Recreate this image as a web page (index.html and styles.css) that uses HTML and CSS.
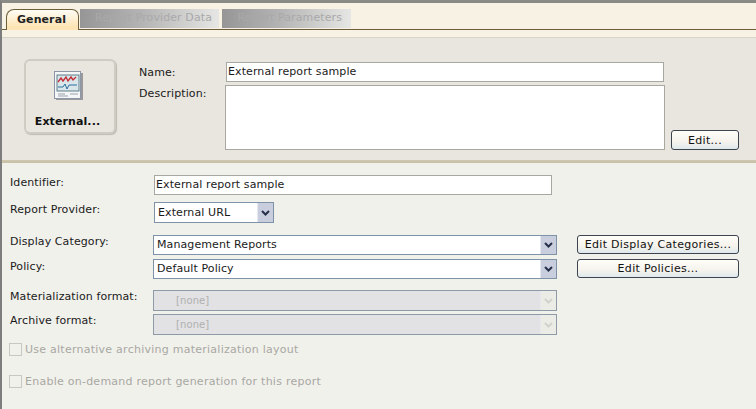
FILE: index.html
```html
<!DOCTYPE html>
<html lang="en">
<head>
<meta charset="utf-8">
<title>Report</title>
<link rel="stylesheet" href="styles.css">
</head>
<body>
<div class="frame">
  <div class="tabs">
    <div class="tab active">General</div>
    <div class="tab off off-a">Report Provider Data</div>
    <div class="tab off off-b">Report Parameters</div>
  </div>
  <div class="band"></div>
  <section class="upper">
    <div class="tile">
      <svg class="tile-icon" width="30" height="30" viewBox="0 0 30 30">
        <rect x="1.5" y="1.5" width="26" height="27" fill="#f4f6f8" stroke="#8c96a8"/>
        <rect x="28" y="3" width="2" height="27" fill="#9a9a9a"/>
        <rect x="3" y="29" width="27" height="1" fill="#9a9a9a"/>
        <rect x="4" y="5" width="22" height="16" fill="#d9e6ea" stroke="#5f7f8a" stroke-width="1"/>
        <path d="M5 12l3-4 2 3 3-4 2 4 3-4 2 3 3-3" fill="none" stroke="#c4303a" stroke-width="1.4"/>
        <path d="M5 17h5l2-3 2 5 2-4h8" fill="none" stroke="#2f6f9f" stroke-width="1"/>
        <path d="M5 24h7M5 26h10M17 24h8" stroke="#9aa3ad" stroke-width="1"/>
      </svg>
      <div class="tile-label">External...</div>
    </div>
    <div class="labels-top">
      <div class="lbl-name">Name:</div>
      <div class="lbl-desc">Description:</div>
    </div>
    <div class="fields-top">
      <div class="box box-name">External report sample</div>
      <div class="box box-desc"></div>
    </div>
    <button class="btn btn-edit" type="button">Edit...</button>
  </section>
  <div class="divider"></div>
  <section class="lower">
    <div class="row row-id">
      <div class="lbl">Identifier:</div>
      <div class="box box-id">External report sample</div>
    </div>
    <div class="row row-prov">
      <div class="lbl">Report Provider:</div>
      <div class="sel sel-prov"><span class="sel-text">External URL</span><span class="arrow"><svg width="9" height="6" viewBox="0 0 9 6"><path d="M1 1l3.5 3.5L8 1" fill="none" stroke="#26304a" stroke-width="2"/></svg></span></div>
    </div>
    <div class="row row-cat">
      <div class="lbl">Display Category:</div>
      <div class="sel sel-wide"><span class="sel-text">Management Reports</span><span class="arrow"><svg width="9" height="6" viewBox="0 0 9 6"><path d="M1 1l3.5 3.5L8 1" fill="none" stroke="#26304a" stroke-width="2"/></svg></span></div>
      <button class="btn btn-side" type="button">Edit Display Categories...</button>
    </div>
    <div class="row row-pol">
      <div class="lbl">Policy:</div>
      <div class="sel sel-wide"><span class="sel-text">Default Policy</span><span class="arrow"><svg width="9" height="6" viewBox="0 0 9 6"><path d="M1 1l3.5 3.5L8 1" fill="none" stroke="#26304a" stroke-width="2"/></svg></span></div>
      <button class="btn btn-side" type="button">Edit Policies...</button>
    </div>
    <div class="row row-mat">
      <div class="lbl">Materialization format:</div>
      <div class="sel sel-wide sel-off"><span class="sel-text">[none]</span><span class="arrow"><svg width="9" height="6" viewBox="0 0 9 6"><path d="M1 1l3.5 3.5L8 1" fill="none" stroke="#d2d2cc" stroke-width="2"/></svg></span></div>
    </div>
    <div class="row row-arc">
      <div class="lbl">Archive format:</div>
      <div class="sel sel-wide sel-off"><span class="sel-text">[none]</span><span class="arrow"><svg width="9" height="6" viewBox="0 0 9 6"><path d="M1 1l3.5 3.5L8 1" fill="none" stroke="#d2d2cc" stroke-width="2"/></svg></span></div>
    </div>
    <div class="check check-a"><span class="cb"></span><span>Use alternative archiving materialization layout</span></div>
    <div class="check check-b"><span class="cb"></span><span>Enable on-demand report generation for this report</span></div>
  </section>
</div>
</body>
</html>
```

FILE: styles.css
```css
html, body { margin: 0; padding: 0; }
body {
  width: 756px; height: 409px; overflow: hidden;
  font: 11px "DejaVu Sans", Verdana, sans-serif; color: #1a1a1a;
  letter-spacing: 0.1px;
}
.frame {
  width: 754px; height: 406px; overflow: hidden;
  border-left: 2px solid #7d7d7d; border-top: 3px solid #8a8a86;
  background: #f1f1ec;
}
.tabs {
  height: 26px; display: flex; align-items: flex-end; padding-left: 4px;
  background: #f8f2e4; border-bottom: 1px solid #6e5f3a;
}
.tab { box-sizing: border-box; white-space: nowrap; }
.active {
  width: 73px; height: 21px; margin-bottom: -1px; text-align: center;
  padding: 3px 2px 0 0; font-weight: bold; color: #222;
  background: linear-gradient(#fffdf6, #fde4b4 85%);
  border: 1px solid #6e5f3a; border-bottom: 0; border-radius: 8px 7px 0 0;
}
.off {
  height: 19px; margin-bottom: 1px; padding-top: 2px; color: #a9a9a9;
  text-align: right; padding-right: 7px; overflow: hidden;
  background: linear-gradient(90deg, #969696, #b4b4b4 45%, #e6e6e4);
}
.off-a { width: 139px; margin-left: 1px; }
.off-b { width: 129px; margin-left: 3px; padding-right: 9px; }
.band { height: 7px; background: #f8f2e4; border-bottom: 1px solid #d8d4c8; }
.upper {
  height: 122px; background: #e9e6df; position: relative;
  display: flex; box-sizing: border-box; padding: 21px 0 0 22px;
}
.tile {
  box-sizing: border-box; width: 92px; height: 75px; text-align: center;
  background: #e9e6df; border: 2px solid #cfccc4; border-radius: 6px;
  box-shadow: 1px 1px 1px #bdbab2; padding: 9px 5px 0 0;
}
.tile-icon { display: block; margin: 0 auto; }
.tile-label { font-weight: bold; margin-top: 15px; color: #111; white-space: nowrap; }
.labels-top { width: 86px; margin-left: 23px; padding-top: 7px; }
.lbl-name { height: 21px; }
.fields-top { margin-top: 3px; }
.box {
  box-sizing: border-box; background: #fff; border: 1px solid #a8a8a0;
  white-space: nowrap; padding-left: 1px;
}
.box-name { width: 438px; height: 20px; line-height: 18px; margin: 0 0 3px 1px; }
.box-desc { width: 440px; height: 65px; }
.btn {
  font: inherit; letter-spacing: 0.3px; color: #111; padding: 0; box-sizing: border-box;
  background: linear-gradient(#fffdf8, #f5f3ec 60%, #dfe9ec);
  border: 1px solid #3c4450; border-radius: 3px;
}
.btn-edit { width: 68px; height: 20px; margin: 71px 0 0 6px; }
.divider { height: 3px; background: linear-gradient(#cfc8b0, #c8c0a4); }
.lower { padding: 12px 0 0 0; }
.row { display: flex; align-items: center; }
.lbl { width: 151px; padding: 0 0 6px 8px; box-sizing: border-box; white-space: nowrap; }
.row-id { height: 20px; }
.row-prov { height: 21px; margin-top: 7px; }
.row-cat { height: 20px; margin-top: 12px; }
.row-pol { height: 20px; margin-top: 4px; }
.row-mat { height: 21px; margin-top: 11px; }
.row-arc { height: 21px; margin-top: 3px; }
.row-cat .lbl, .row-mat .lbl, .row-arc .lbl { padding-bottom: 8px; }
.box-id { width: 398px; height: 20px; line-height: 18px; margin-left: 1px; }
.sel {
  box-sizing: border-box; height: 100%; display: flex; align-items: center;
  background: #fff; border: 1px solid #7f93a8;
}
.sel-prov { width: 120px; margin-left: 1px; }
.sel-wide { width: 404px; }
.sel-text { flex: 1; padding: 0 0 1px 3px; white-space: nowrap; }
.arrow {
  width: 15px; height: 100%; display: flex; align-items: center; justify-content: center;
  background: #c8cede; border-left: 1px solid #e6e8f0;
}
.sel-off { background: #e2e2e4; border-color: #8e9aa8; color: #b0b0b0; }
.sel-off .sel-text { padding-left: 22px; font-size: 10px; }
.sel-off .arrow { background: #ecece6; }
.btn-side { width: 162px; height: 19px; margin-left: 20px; align-self: flex-start; }
.check { display: flex; align-items: center; color: #a8a8a2; height: 13px; margin-left: 7px; letter-spacing: 0.25px; }
.check-a { margin-top: 8px; }
.check-b { margin-top: 19px; }
.cb {
  box-sizing: border-box; width: 13px; height: 13px; margin-right: 3px;
  border: 1px solid #c8c8c2; background: #f1f1ec;
}
```
